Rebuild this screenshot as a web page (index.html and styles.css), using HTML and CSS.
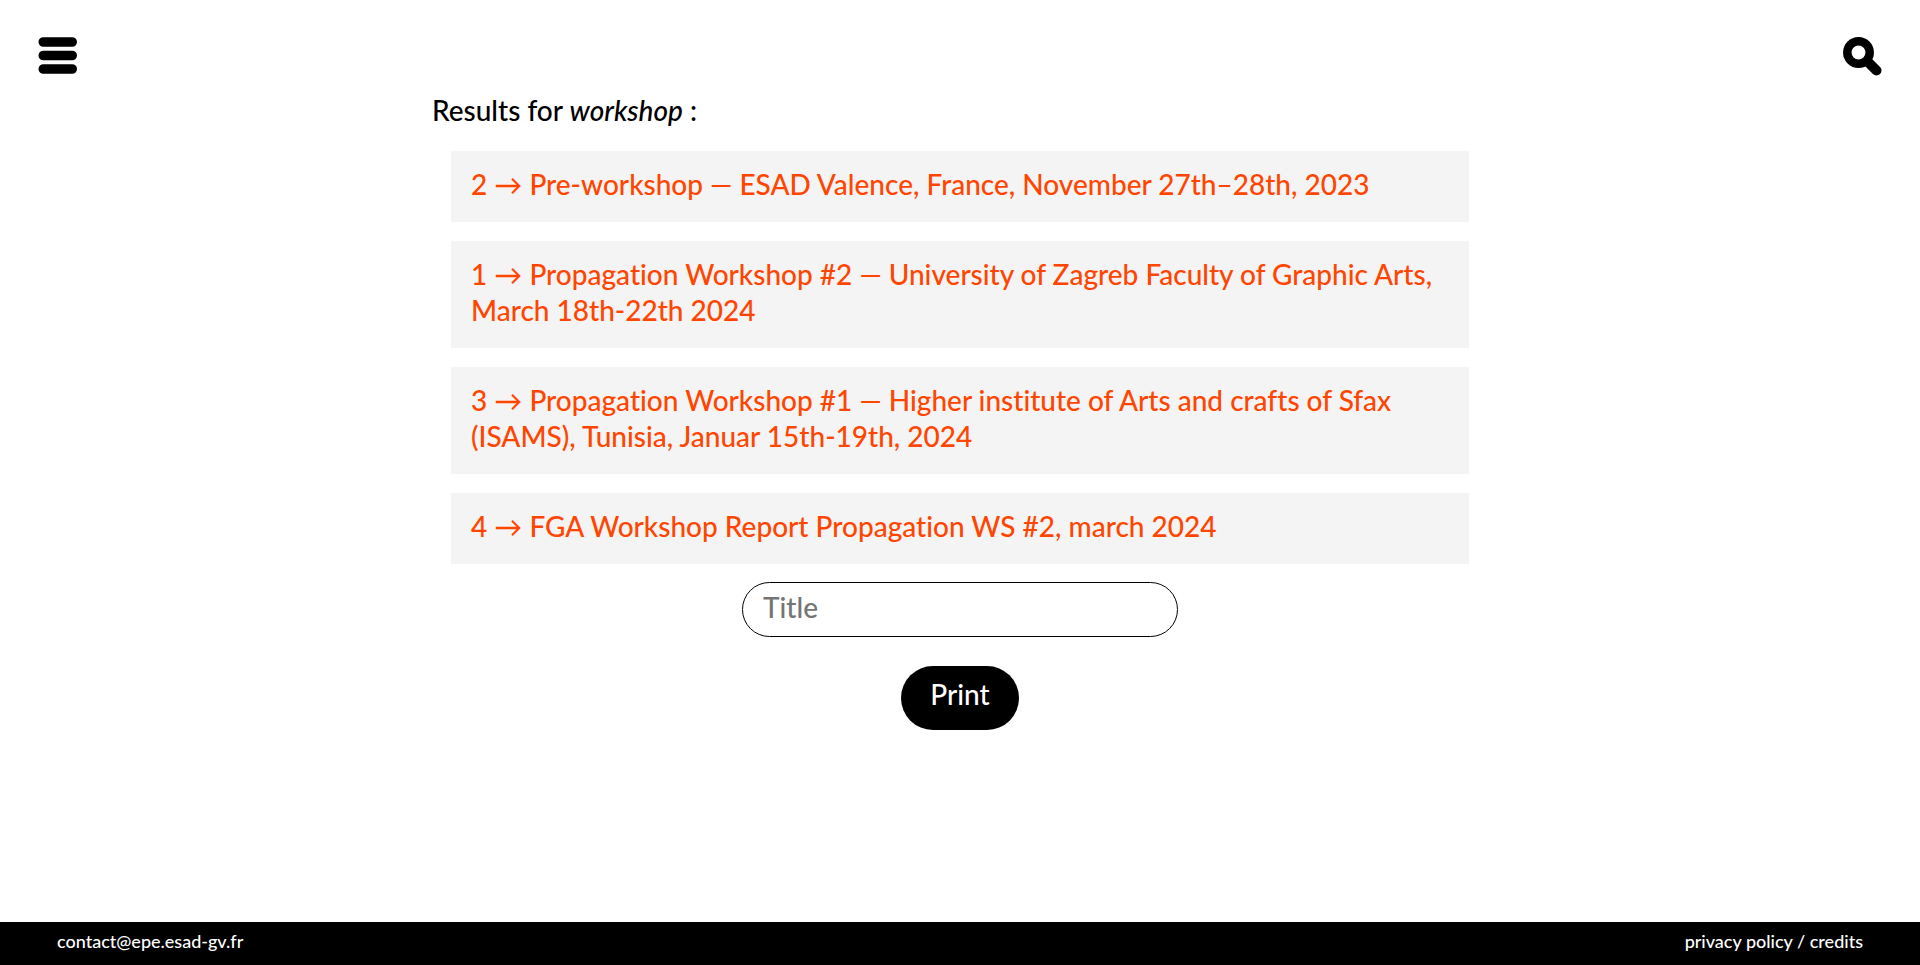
FILE: index.html
```
<!DOCTYPE html>
<html lang="en">
<head>
<meta charset="utf-8">
<meta name="viewport" content="width=device-width, initial-scale=1">
<title>Results</title>
<link rel="stylesheet" href="styles.css">
</head>
<body>
<header class="topbar">
<button class="icon-button" type="button" aria-label="Menu"><svg viewBox="0 0 40 40"><path d="M5.3 6H34.2M5.3 19.5H34.2M5.3 33H34.2" stroke="currentColor" stroke-width="9.6" stroke-linecap="round"/></svg></button>
<button class="icon-button" type="button" aria-label="Search"><svg viewBox="0 0 40 40" fill="none" stroke="currentColor"><circle cx="16.5" cy="16.5" r="11.2" stroke-width="8.5"/><path d="M26 26L34.5 34.5" stroke-width="10" stroke-linecap="round"/></svg></button>
</header>
<main class="results">
<h1 class="heading">Results for <em class="term">workshop</em> :</h1>
<ul class="list">
<li><a class="result" href="#">2 → Pre-workshop — ESAD Valence, France, November 27th–28th, 2023</a></li>
<li><a class="result" href="#">1 → Propagation Workshop #2 — University of Zagreb Faculty of Graphic Arts,<br>March 18th-22th 2024</a></li>
<li><a class="result" href="#">3 → Propagation Workshop #1 — Higher institute of Arts and crafts of Sfax<br>(ISAMS), Tunisia, Januar 15th-19th, 2024</a></li>
<li><a class="result" href="#">4 → FGA Workshop Report Propagation WS #2, march 2024</a></li>
</ul>
<form class="print-form">
<input class="title-input" type="text" placeholder="Title" aria-label="Title">
<button class="print-button" type="button">Print</button>
</form>
</main>
<footer class="footer">
<a href="#">contact@epe.esad-gv.fr</a>
<a href="#">privacy policy / credits</a>
</footer>
</body>
</html>
```
FILE: styles.css
```
* { box-sizing: border-box; }
body { margin: 0; min-height: 100vh; display: flex; flex-direction: column; background: #fff; color: #000; font-family: Lato, sans-serif; font-size: 28px; font-weight: 500; line-height: 36px; font-variant-ligatures: none; }
.topbar { display: flex; justify-content: space-between; padding: 36px 38px 16px; }
.icon-button { width: 40px; height: 40px; padding: 0; border: 0; background: none; color: #000; }
.icon-button svg { display: block; width: 100%; height: 100%; }
.results { flex: 1; width: 55%; margin: 0 auto; }
.heading { margin: 0 0 23px; font-size: 28px; font-weight: 500; }
.term { font-style: italic; }
.list { list-style: none; margin: 0; padding: 0 19px; display: grid; gap: 19px; }
.result { display: block; padding: 15px 20px 20px; background: #f4f4f4; color: #ff4500; text-decoration: none; }
.print-form { display: flex; flex-direction: column; align-items: center; gap: 29px; padding-top: 18px; }
.title-input { width: 436px; height: 55px; padding: 0 20px 6px; border: 1px solid #000; border-radius: 28px; background: #fff; font: inherit; }
.title-input::placeholder { color: #757575; }
.print-button { height: 64px; padding: 0 29px 8px; border: 0; border-radius: 32px; background: #000; color: #fff; font: inherit; }
.footer { display: flex; justify-content: space-between; padding: 7px 57px 12px; background: #000; font-size: 18px; line-height: 24px; }
.footer a { color: #fff; text-decoration: none; }
```
